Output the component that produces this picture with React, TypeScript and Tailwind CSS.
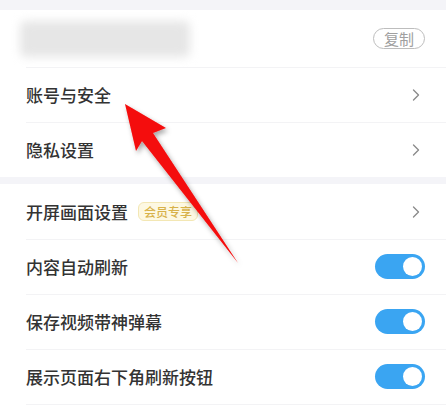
import { ChevronRight } from 'lucide-react';

const Toggle = () => (
  <div className="w-[50px] h-[25px] rounded-full bg-[#3aa5f2] flex items-center justify-end pr-[3px]">
    <div className="w-[19px] h-[19px] rounded-full bg-white" />
  </div>
);

const Chevron = () => <ChevronRight size={20} strokeWidth={1.6} className="text-[#8a8a8a]" />;

const Divider = () => <div className="absolute top-0 left-[26px] right-0 h-px bg-[#f3f3f5]" />;

export default function App() {
  const font = { fontFamily: '"Noto Sans CJK SC", "Noto Sans", sans-serif' };
  return (
    <div className="w-[446px] h-[417px] bg-white relative overflow-hidden" style={font}>
      <div className="h-[10px] bg-[#f4f4f8]" />

      <div className="h-[57px] pl-[20px] pr-[21px] flex items-center justify-between">
        <div className="w-[170px] h-[36px] bg-[#e6e6e6] rounded-md blur-[5px]" />
        <div className="h-[21px] px-[10px] rounded-full border-[1.5px] border-[#bdbdbd] text-[#a0a0a0] text-[15px] leading-none flex items-center">
          复制
        </div>
      </div>

      {['账号与安全', '隐私设置'].map((label) => (
        <div key={label} className="h-[55px] pl-[26px] pr-[20px] flex items-center justify-between relative">
          <Divider />
          <span className="text-[17px] font-medium text-[#333]">{label}</span>
          <Chevron />
        </div>
      ))}

      <div className="h-[7px] bg-[#f4f4f8]" />

      <div className="h-[55px] pl-[26px] pr-[20px] flex items-center justify-between">
        <div className="flex items-center gap-[10px]">
          <span className="text-[17px] font-medium text-[#333]">开屏画面设置</span>
          <span className="h-[19px] px-[5px] rounded-[6px] bg-[#fdf8e2] border border-[#f3e7b4] text-[#d8b24a] text-[12px] font-medium leading-none flex items-center">
            会员专享
          </span>
        </div>
        <Chevron />
      </div>

      {['内容自动刷新', '保存视频带神弹幕', '展示页面右下角刷新按钮'].map((label) => (
        <div key={label} className="h-[55px] pl-[26px] pr-[21px] flex items-center justify-between relative">
          <Divider />
          <span className="text-[17px] font-medium text-[#333]">{label}</span>
          <Toggle />
        </div>
      ))}
      <div className="h-px ml-[26px] bg-[#f3f3f5]" />

      {/* red pointer arrow drawn over the list */}
      <svg className="absolute left-0 top-0 pointer-events-none" width="446" height="417" viewBox="0 0 446 417">
        <defs>
          <filter id="sh" x="-20%" y="-20%" width="140%" height="140%">
            <feDropShadow dx="2" dy="3" stdDeviation="2.5" floodColor="#000" floodOpacity="0.35" />
          </filter>
        </defs>
        <polygon points="125,104 166,128 153,133 238,263 142,141 136,151" fill="#f40a0a" filter="url(#sh)" />
      </svg>
    </div>
  );
}
